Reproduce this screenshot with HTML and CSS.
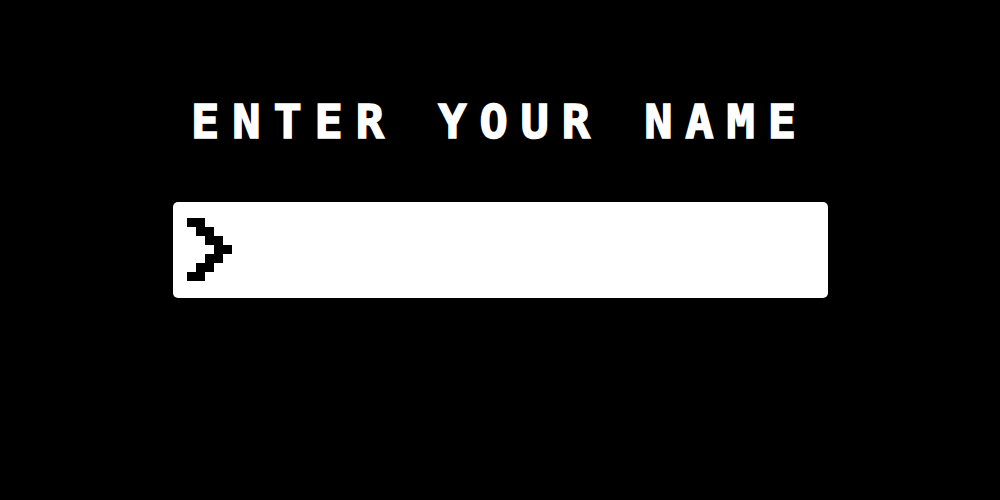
FILE: index.html
```html
<!DOCTYPE html>
<html lang="en">
<head>
<meta charset="utf-8">
<title>Enter your name</title>
<link rel="stylesheet" href="styles.css">
</head>
<body>
<main class="screen">
  <h1 class="title">ENTER YOUR NAME</h1>
  <label class="name-box">
    <svg class="prompt" width="45" height="63" viewBox="0 0 45 63" aria-hidden="true">
      <path d="M0 0H18V9H27V18H36V27H45V36H36V45H27V54H18V63H0V54H9V45H18V36H27V27H18V18H9V9H0Z" fill="#000"/>
    </svg>
    <input class="name-input" type="text" aria-label="Your name">
  </label>
</main>
</body>
</html>
```
FILE: styles.css
```css
html, body {
  margin: 0;
  padding: 0;
  background: #000;
  height: 100%;
}
.screen {
  display: flex;
  flex-direction: column;
  align-items: center;
  padding-top: 98px;
}
.title {
  margin: 0;
  color: #fff;
  font-family: "DejaVu Sans Mono", "Liberation Mono", monospace;
  font-weight: bold;
  font-size: 47px;
  line-height: 47px;
  letter-spacing: 12.9px;
  -webkit-text-stroke: 1.5px #fff;
}
.name-box {
  margin-top: 57px;
  width: 655px;
  height: 96px;
  box-sizing: border-box;
  background: #fff;
  border-radius: 5px;
  display: flex;
  align-items: center;
  padding: 0 14px;
  gap: 12px;
}
.prompt {
  flex: none;
  display: block;
  margin-top: -2px;
}
.name-input {
  flex: 1;
  border: none;
  outline: none;
  background: transparent;
  font-family: "DejaVu Sans Mono", monospace;
  font-size: 40px;
  color: #000;
  padding: 0;
}
```
